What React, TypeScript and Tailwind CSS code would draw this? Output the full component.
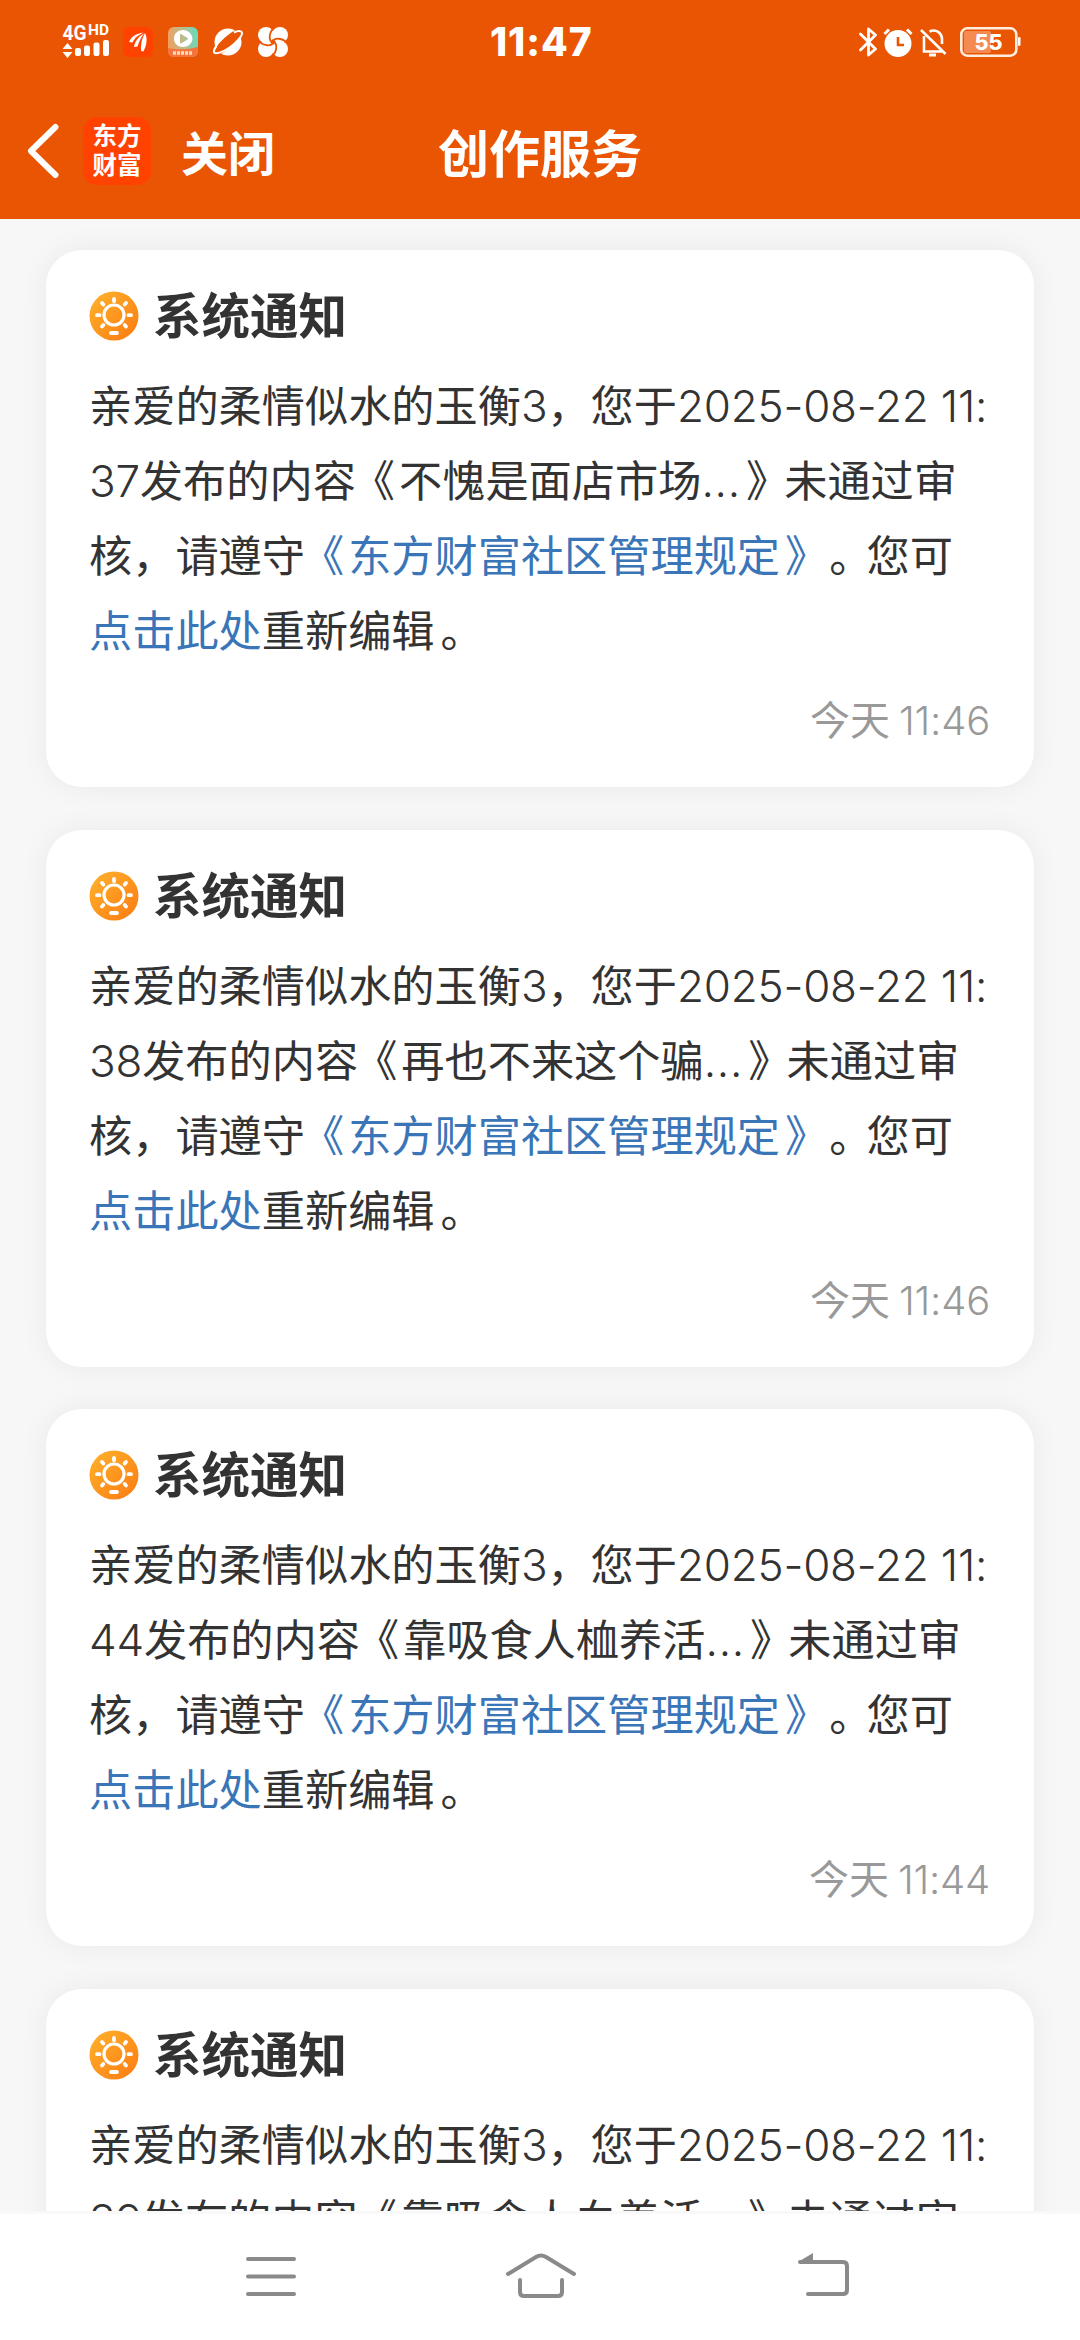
import type { ReactNode } from "react";

type Notice = {
  id: number;
  minute: string;
  title: string;
  time: string;
};

const notices: Notice[] = [
  { id: 1, minute: "37", title: "不愧是面店市场", time: "11:46" },
  { id: 2, minute: "38", title: "再也不来这个骗", time: "11:46" },
  { id: 3, minute: "44", title: "靠吸食人桖养活", time: "11:44" },
  { id: 4, minute: "39", title: "靠吸食人血养活", time: "11:44" },
];

const Num = ({ children }: { children: ReactNode }) => (
  <span className="font-['Inter'] text-[44px] font-[350] tracking-[-0.2px]">{children}</span>
);

// book title marks and full stops sit a little outward of their em box
const Open = () => <span className="-ml-[4px] mr-[4px]">《</span>;
const Close = () => <span className="-mr-[5px] ml-[5px]">》</span>;
const Stop = () => <span className="-mr-[6px] ml-[6px]">。</span>;

const SunIcon = () => (
  <svg className="h-[50px] w-[50px]" viewBox="0 0 50 50" fill="none">
    <defs>
      <linearGradient id="sun" x1="0" y1="0" x2="1" y2="1">
        <stop offset="0" stopColor="#ffb32c" />
        <stop offset="1" stopColor="#fb7a12" />
      </linearGradient>
    </defs>
    <circle cx="25" cy="25" r="24.5" fill="url(#sun)" />
    <circle cx="25" cy="24" r="10" stroke="#fff" strokeWidth="3.2" />
    <path
      d="M25 8v2.200M13 12l1.300 1.500M37 12l-1.300 1.500M8 24.200h2.500M39.500 24.200H42M13 35.500l1.300-1.500M37 35.500l-1.300-1.500M22 42h6"
      stroke="#fff"
      strokeWidth="3.8"
      strokeLinecap="round"
    />
  </svg>
);

const StatusBar = () => (
  <div className="flex h-[84px] items-center pl-[62px] pr-[59px] text-white">
    <div className="flex w-[428px] items-center">
      <svg className="h-[36px] w-[50px] overflow-visible" viewBox="0 0 50 36" fill="#fff">
        <text x="0.5" y="16" fontFamily="Roboto" fontWeight="700" fontSize="20" textLength="24" lengthAdjust="spacingAndGlyphs">4G</text>
        <text x="26" y="11" fontFamily="Roboto" fontWeight="700" fontSize="14" textLength="21" lengthAdjust="spacingAndGlyphs">HD</text>
        <path d="M5.500 19l5 6h-10zM5.500 34l5-6h-10z" />
        <rect x="13" y="24" width="6" height="8" rx="2" />
        <rect x="22" y="21.500" width="6" height="10.500" rx="2" />
        <rect x="31.500" y="18.500" width="6" height="13.500" rx="2" />
        <rect x="41" y="16" width="6" height="16" rx="2" />
      </svg>
      <svg className="ml-[11px] h-[30px] w-[30px]" viewBox="0 0 30 30" fill="#fff">
        <rect width="30" height="30" rx="6" fill="#ff4200" />
        <path d="M6 15C8.500 9.500 13 6.500 20.500 5.500 15.500 8 12 10.500 9.500 15.500z" />
        <path d="M11 20C12 14 15.500 9.500 21 6.500 18 10.500 16 14.500 14.500 19.500z" />
        <path d="M18 24C17.500 17 19 11 22 6c2.500 5 2 11-1.500 18.500z" />
      </svg>
      <svg className="ml-[15px] h-[30px] w-[30px]" viewBox="0 0 30 30">
        <defs>
          <linearGradient id="video" x1="0" y1="0.300" x2="1" y2="0.200">
            <stop offset="0" stopColor="#f0a060" />
            <stop offset="0.500" stopColor="#b8bd8c" />
            <stop offset="1" stopColor="#62dcc0" />
          </linearGradient>
        </defs>
        <rect width="30" height="30" rx="6" fill="url(#video)" />
        <path d="M0 21q15 3 30-1v4a6 6 0 0 1-6 6H6a6 6 0 0 1-6-6z" fill="#f4743c" />
        <path d="M15 3c5 0 9 4 9.500 8.500C24 17 20 20 15 20s-9-3.500-9-8.500S10 3 15 3zm-3 5v7.500q0 1.500 1.500.8l6-3.800q1-.8 0-1.500l-6-3.700Q12 6.500 12 8z" fill="#fff" fillRule="evenodd" />
        <path d="M5 26h20" stroke="#ffd9bd" strokeWidth="3.500" strokeDasharray="3 1" />
      </svg>
      <svg className="ml-[15px] h-[30px] w-[30px]" viewBox="0 0 30 30">
        <circle cx="15" cy="15" r="13.500" fill="#fff" />
        <ellipse cx="15" cy="15" rx="18" ry="5.500" transform="rotate(-42 15 15)" fill="#ea5504" />
        <path d="M21 5.500c4-2 7.500-2 8 .2.500 3-5 9.500-12 14.500S1.500 28 1 25c-.3-2 .8-4 2.500-6" fill="none" stroke="#fff" strokeWidth="2" />
      </svg>
      <svg className="ml-[15px] h-[30px] w-[30px]" viewBox="0 0 30 30" fill="#fff">
        <circle cx="8" cy="8" r="8" />
        <circle cx="22" cy="22" r="8" />
        <circle cx="22" cy="8" r="8" />
        <circle cx="8" cy="22" r="8" />
        <path d="M15 15C10 14 11 5 16 1M15 15c-1 5-10 4-14-1M15 15c5 1 4 10-1 14M15 15c1-5 10-4 14 1" fill="none" stroke="#ea5504" strokeWidth="1.800" />
      </svg>
    </div>
    <div className="whitespace-nowrap font-['Inter'] text-[39px] font-extrabold leading-[50px] tracking-[0.9px]">11:47</div>
    <div className="ml-auto flex items-center">
      <svg className="h-[30px] w-[18px]" viewBox="0 0 18 30" fill="none" stroke="#fff" strokeWidth="2.800" strokeLinejoin="round" strokeLinecap="round">
        <path d="M1.500 7l15 15-7 6V2l7 6-15 15" />
      </svg>
      <svg className="ml-[6px] h-[30px] w-[30px]" viewBox="0 0 30 30">
        <circle cx="15" cy="16.500" r="13.500" fill="#fff" />
        <path d="M1.500 7L6 2.500M28.500 7L24 2.500" stroke="#fff" strokeWidth="3" />
        <path d="M15 10v8h6" stroke="#ea5504" strokeWidth="2.600" fill="none" />
      </svg>
      <svg className="ml-[7px] h-[30px] w-[27px]" viewBox="0 0 27 30" fill="none" stroke="#fff" strokeWidth="2.600">
        <path d="M1 3l24.500 24M4 9v15.500h18M9.500 4.500C16 1.500 22 6 22 12.500V17" />
        <path d="M9 28h7" strokeWidth="3" />
      </svg>
      <svg className="ml-[13px] h-[30px] w-[61px] overflow-visible" viewBox="0 0 61 30">
        <rect x="1.300" y="1.300" width="55" height="27.400" rx="6" fill="none" stroke="#ffeedd" strokeWidth="2.600" />
        <rect x="4" y="4" width="27" height="22" rx="2" fill="#f58b52" />
        <rect x="58" y="10" width="2.500" height="9" rx="1.200" fill="#fff" />
        <text x="14.5" y="23" fontFamily="Inter" fontWeight="800" fontSize="21.500" fill="#fff">55</text>
      </svg>
    </div>
  </div>
);

const NavBar = () => (
  <div className="grid h-[135px] grid-cols-3 items-center pb-[2px] text-white">
    <div className="flex items-center pl-[27px]">
      <svg className="h-[56px] w-[33px]" viewBox="0 0 33 56" fill="none" stroke="#fff" strokeWidth="6" strokeLinecap="round" strokeLinejoin="round">
        <path d="M28.500 4L4 28l24.500 24" />
      </svg>
      <div className="ml-[23px] flex h-[68px] w-[68px] flex-col items-center rounded-[14px] bg-[#ff4200] pt-[3px] text-[24.500px] font-bold leading-[29px]">
        <span>东方</span>
        <span>财富</span>
      </div>
      <span className="ml-[30px] whitespace-nowrap text-[47px] font-bold leading-[70px]">关闭</span>
    </div>
    <h1 className="text-center text-[51px] font-bold leading-[76px]">创作服务</h1>
  </div>
);

const NoticeCard = ({ notice }: { notice: Notice }) => (
  <article className="h-[537px] shrink-0 rounded-[36px] bg-white pl-[43px] pr-[44px] pt-[36px] shadow-[0_0_30px_rgba(0,0,0,0.06)]">
    <div className="flex h-[60px] items-center">
      <SunIcon />
      <h2 className="ml-[14px] pb-[6px] text-[48.500px] font-bold leading-[72px]">系统通知</h2>
    </div>
    <div className="mt-[20px] whitespace-nowrap text-[43.200px] leading-[75px] [text-spacing-trim:space-all]">
      <div className="h-[75px]">
        亲爱的柔情似水的玉衡<Num>3</Num>，您于<Num>2025-08-22 11:</Num>
      </div>
      <div className="h-[75px]">
        <Num>{notice.minute}</Num>发布的内容<Open />{notice.title}
        <span className="font-['Inter'] text-[44px] font-light tracking-[0.8px]">...</span>
        <Close />未通过审
      </div>
      <div className="h-[75px]">
        核，请遵守<a className="text-[#3a75b8]"><Open />东方财富社区管理规定<Close /></a><Stop />您可
      </div>
      <div className="h-[75px]">
        <a className="text-[#3a75b8]">点击此处</a>重新编辑<Stop />
      </div>
    </div>
    <div className="mt-[22px] text-right text-[40px] leading-[60px] text-[#999]">
      今天 <span className="font-['Inter'] font-[350] tracking-[-0.200px]">{notice.time}</span>
    </div>
  </article>
);

const SystemNav = () => (
  <footer className="flex h-[129px] shrink-0 items-center border-t-[3px] border-[#f9f9f9] bg-white">
    <svg className="ml-[240px] h-[60px] w-[60px]" viewBox="0 0 60 60" fill="none" stroke="#8a8a8a" strokeWidth="4" strokeLinecap="round">
      <path d="M8 12h46M8 29.500h46M8 47h46" />
    </svg>
    <svg className="ml-[204px] h-[60px] w-[74px]" viewBox="0 0 74 60" fill="none" stroke="#8a8a8a" strokeWidth="4" strokeLinecap="round">
      <path d="M4 27L32 10q5-3 10 0l28 17M16 33v12q0 4 4 4h34q4 0 4-4V33" />
    </svg>
    <svg className="ml-[214px] h-[60px] w-[60px]" viewBox="0 0 60 60" fill="none" stroke="#8a8a8a" strokeWidth="4" strokeLinecap="round">
      <path d="M8 15h43q4 0 4 4v24q0 4-4 4H16" />
      <path d="M6 15l15-9v9z" fill="#8a8a8a" stroke="none" />
    </svg>
  </footer>
);

const App = () => (
  <div className="flex h-[2340px] w-[1080px] flex-col overflow-hidden bg-[#f7f7f7] font-['Noto_Sans_CJK_SC',sans-serif] text-[#333]">
    <header className="h-[219px] shrink-0 bg-[#ea5504]">
      <StatusBar />
      <NavBar />
    </header>
    <main className="flex min-h-0 flex-1 flex-col gap-[42.500px] overflow-hidden px-[46px] pt-[31px]">
      {notices.map((notice) => (
        <NoticeCard key={notice.id} notice={notice} />
      ))}
    </main>
    <SystemNav />
  </div>
);

export default App;
